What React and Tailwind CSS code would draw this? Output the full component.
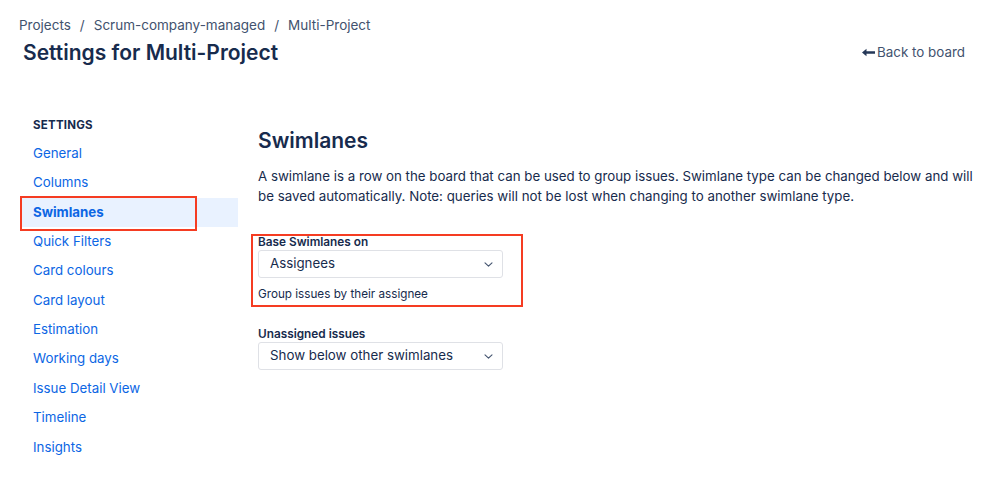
const NAV = [
  'General',
  'Columns',
  'Swimlanes',
  'Quick Filters',
  'Card colours',
  'Card layout',
  'Estimation',
  'Working days',
  'Issue Detail View',
  'Timeline',
  'Insights',
];

function Chevron() {
  return (
    <svg width="9" height="5" viewBox="0 0 9 5" fill="none" className="text-[#44546f]">
      <path d="M1 0.8l3.5 3.4L8 0.8" stroke="currentColor" strokeWidth="1.1" strokeLinecap="round" strokeLinejoin="round" />
    </svg>
  );
}

function Select({ value }) {
  return (
    <div className="w-[245px] h-[28px] border border-[#dfe1e6] rounded-[3px] bg-white flex items-center justify-between pl-[11px] pr-[9px]">
      <span className="text-[13.3px] text-[#172b4d]">{value}</span>
      <Chevron />
    </div>
  );
}

function BackArrow() {
  return (
    <svg width="13" height="9" viewBox="0 0 13 9" className="text-[#253858]">
      <path d="M0 4.5L4.5 0.8V3.3H13V5.7H4.5V8.2Z" fill="currentColor" />
    </svg>
  );
}

export default function App() {
  return (
    <div className="w-[999px] h-[499px] bg-white font-['Inter',sans-serif] text-[#172b4d] overflow-hidden">
      {/* Header */}
      <div className="flex items-start justify-between pt-[15px] pl-[19px] pr-[34px]">
        <div>
          <div className="flex items-center gap-[9px] text-[13.5px] leading-[20px] text-[#42526e]">
            <span>Projects</span>
            <span>/</span>
            <span>Scrum-company-managed</span>
            <span>/</span>
            <span>Multi-Project</span>
          </div>
          <h1 className="mt-[4px] ml-[4px] text-[21px] leading-[28px] font-semibold text-[#172b4d]">
            Settings for Multi-Project
          </h1>
        </div>
        <div className="mt-[27px] flex items-center gap-[2px] text-[13.4px] leading-[20px] text-[#42526e]">
          <BackArrow />
          <span>Back to board</span>
        </div>
      </div>

      <div className="flex mt-[50px]">
        {/* Sidebar */}
        <div className="ml-[20px] w-[218px]">
          <div className="pl-[13px] text-[11.5px] leading-[16px] font-bold tracking-[0.02em] text-[#172b4d]">SETTINGS</div>
          <div className="mt-[6px]">
            {NAV.map((item) =>
              item === 'Swimlanes' ? (
                <div key={item} className="relative h-[29.4px] flex items-center pl-[13px] bg-[#e9f2ff]">
                  <span className="text-[13.3px] font-bold text-[#0c66e4]">{item}</span>
                  <div className="absolute left-0 -top-[2px] w-[177px] h-[35px] border-2 border-[#f53c22] pointer-events-none" />
                </div>
              ) : (
                <div key={item} className="h-[29.4px] flex items-center pl-[13px]">
                  <span className="text-[13.3px] text-[#0c66e4]">{item}</span>
                </div>
              )
            )}
          </div>
        </div>

        {/* Main */}
        <div className="ml-[20px] w-[722px]">
          <h2 className="mt-[10px] text-[21px] leading-[28px] font-semibold text-[#172b4d]">Swimlanes</h2>
          <p className="mt-[11px] text-[13.3px] leading-[20px] text-[#172b4d]">
            A swimlane is a row on the board that can be used to group issues. Swimlane type can be changed below and will
            be saved automatically. Note: queries will not be lost when changing to another swimlane type.
          </p>

          <div className="relative mt-[28px]">
            <div className="text-[11.8px] leading-[16px] font-semibold text-[#172b4d]">Base Swimlanes on</div>
            <Select value="Assignees" />
            <div className="mt-[8px] text-[11.7px] leading-[16px] text-[#172b4d]">Group issues by their assignee</div>
            <div className="absolute -left-[7px] top-0 w-[272px] h-[73px] border-2 border-[#f53c22] pointer-events-none" />
          </div>

          <div className="mt-[24px]">
            <div className="text-[11.8px] leading-[16px] font-semibold text-[#172b4d]">Unassigned issues</div>
            <Select value="Show below other swimlanes" />
          </div>
        </div>
      </div>
    </div>
  );
}
